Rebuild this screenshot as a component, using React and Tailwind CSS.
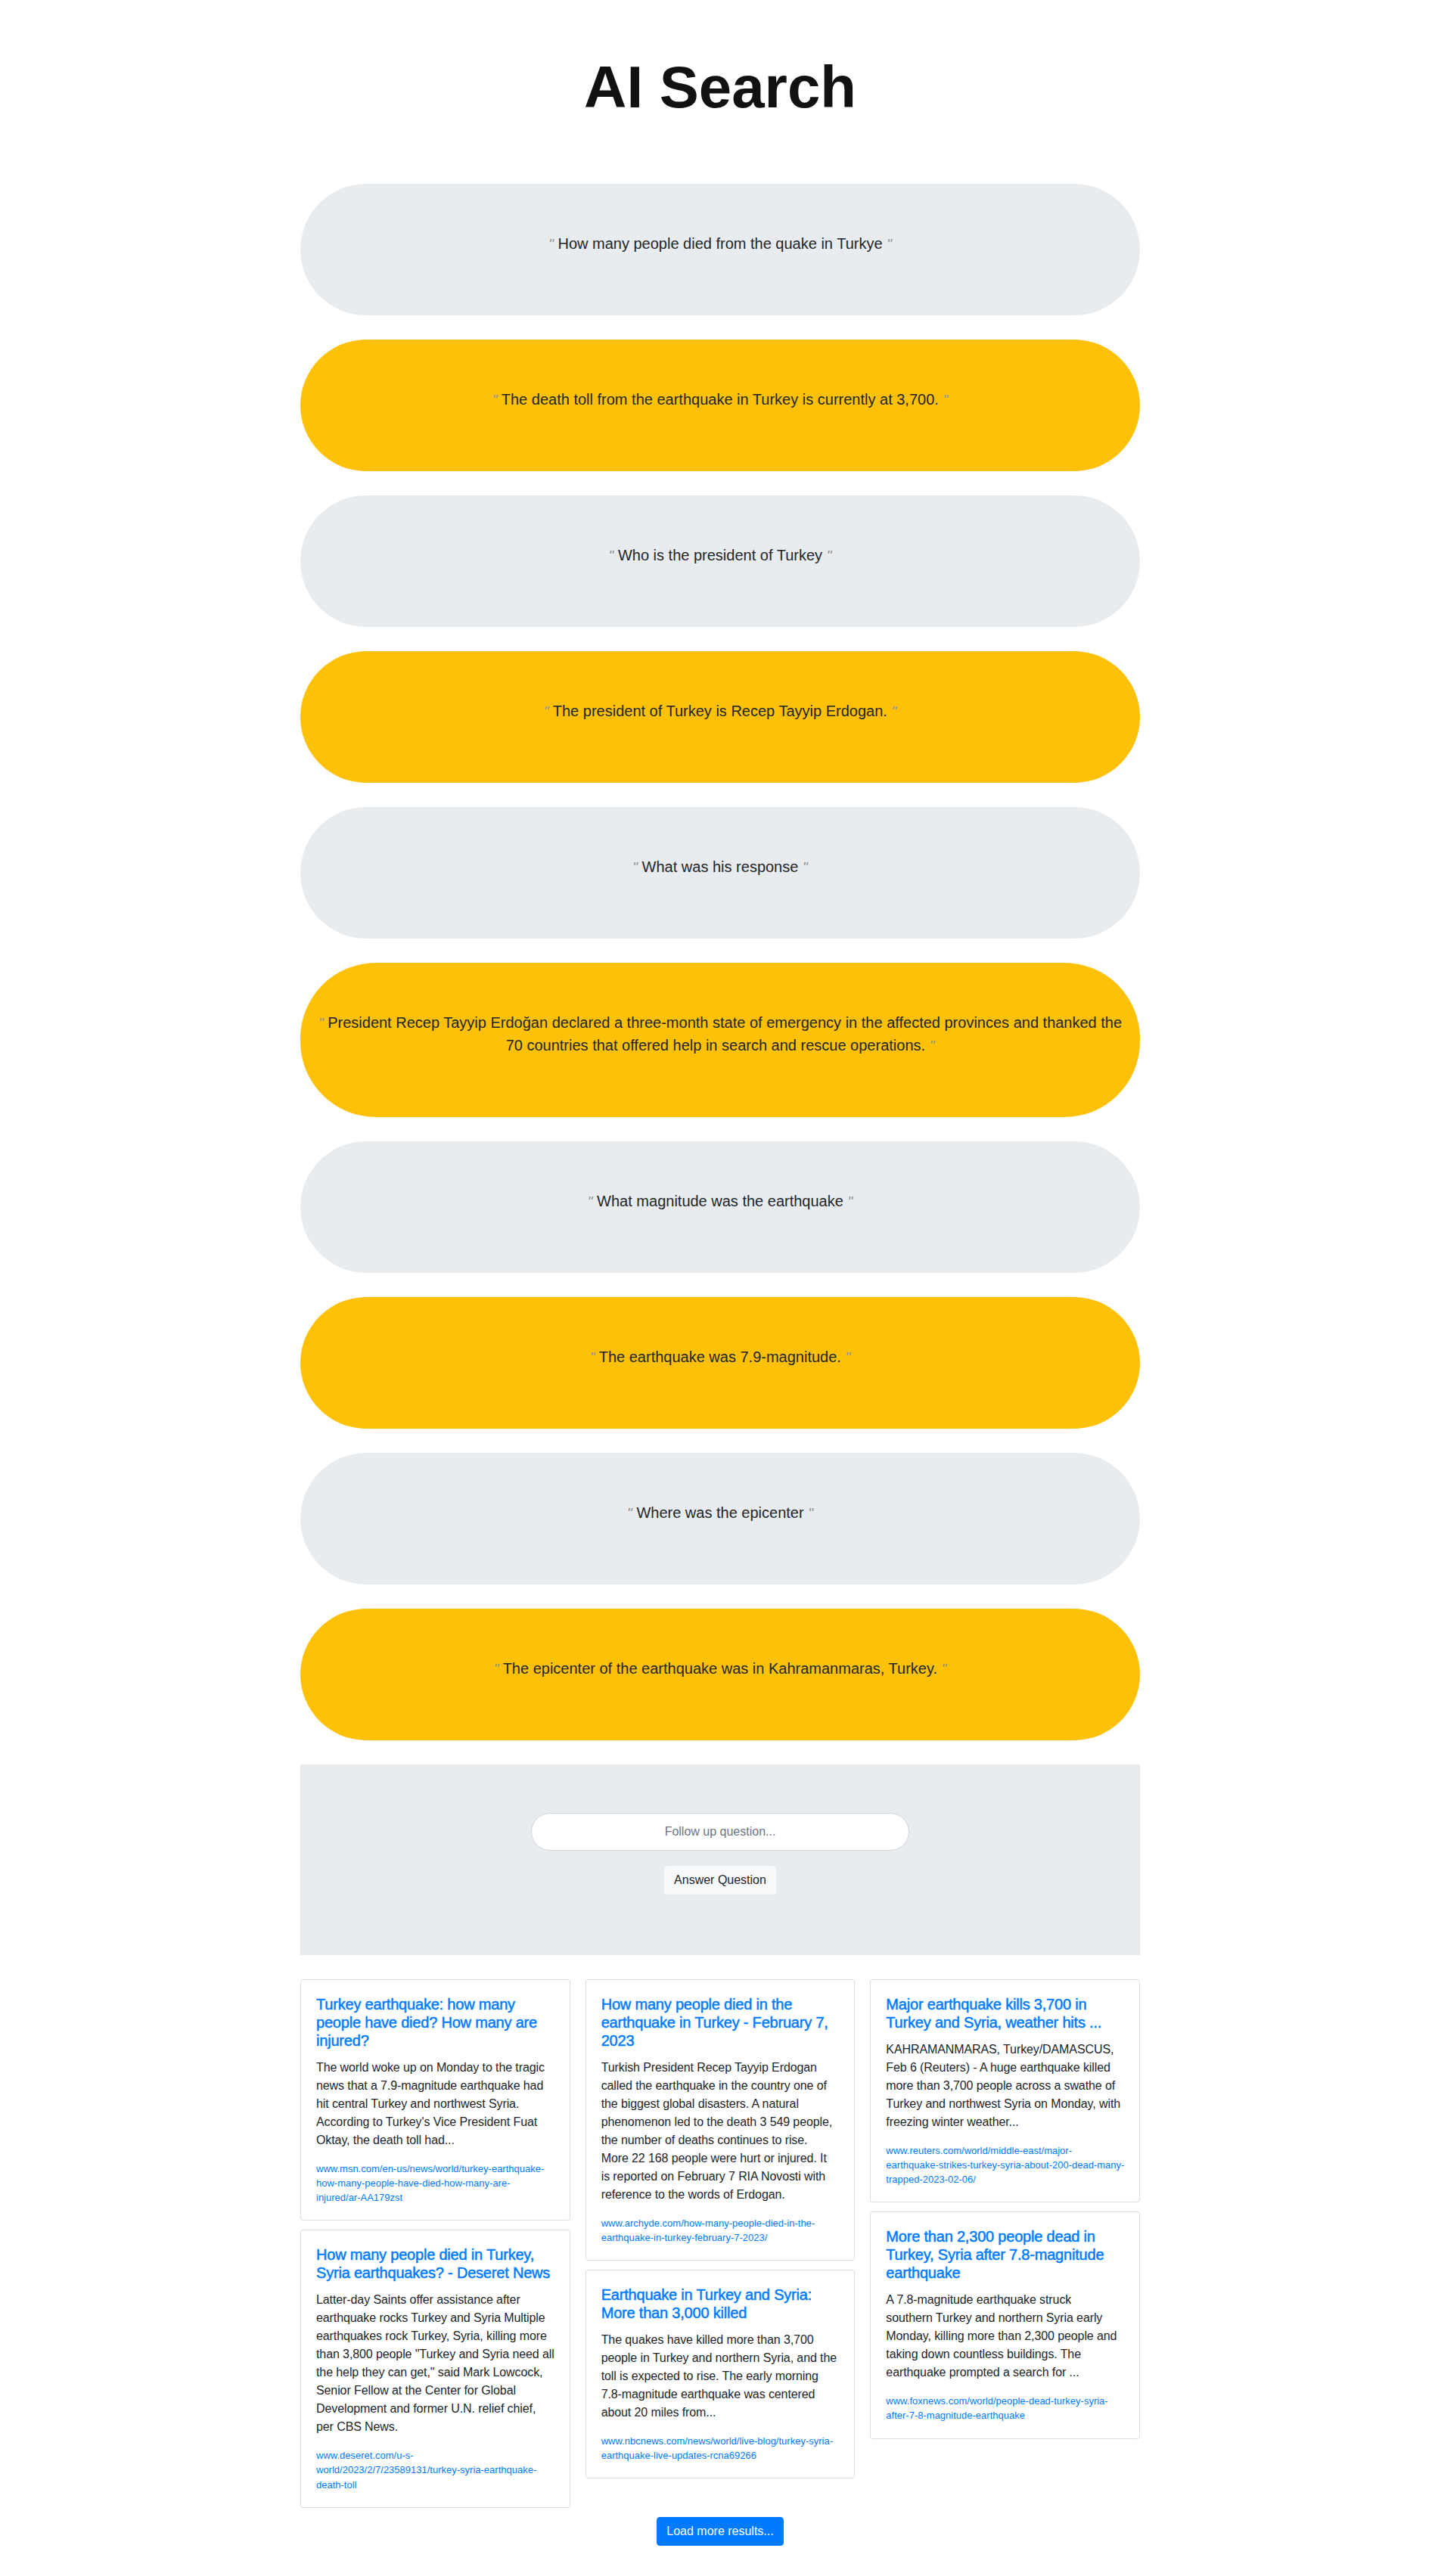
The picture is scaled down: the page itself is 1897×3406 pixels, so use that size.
import React from "react";

const chat = [
  { q: true, t: ["How many people died from the quake in Turkye"] },
  { q: false, t: ["The death toll from the earthquake in Turkey is currently at 3,700."] },
  { q: true, t: ["Who is the president of Turkey"] },
  { q: false, t: ["The president of Turkey is Recep Tayyip Erdogan."] },
  { q: true, t: ["What was his response"] },
  {
    q: false,
    t: [
      "President Recep Tayyip Erdoğan declared a three-month state of emergency in the affected provinces and thanked the",
      "70 countries that offered help in search and rescue operations.",
    ],
  },
  { q: true, t: ["What magnitude was the earthquake"] },
  { q: false, t: ["The earthquake was 7.9-magnitude."] },
  { q: true, t: ["Where was the epicenter"] },
  { q: false, t: ["The epicenter of the earthquake was in Kahramanmaras, Turkey."] },
];

const columns = [
  [
    {
      title: ["Turkey earthquake: how many", "people have died? How many are", "injured?"],
      text: [
        "The world woke up on Monday to the tragic",
        "news that a 7.9-magnitude earthquake had",
        "hit central Turkey and northwest Syria.",
        "According to Turkey's Vice President Fuat",
        "Oktay, the death toll had...",
      ],
      link: [
        "www.msn.com/en-us/news/world/turkey-earthquake-",
        "how-many-people-have-died-how-many-are-",
        "injured/ar-AA179zst",
      ],
    },
    {
      title: ["How many people died in Turkey,", "Syria earthquakes? - Deseret News"],
      text: [
        "Latter-day Saints offer assistance after",
        "earthquake rocks Turkey and Syria Multiple",
        "earthquakes rock Turkey, Syria, killing more",
        'than 3,800 people "Turkey and Syria need all',
        'the help they can get," said Mark Lowcock,',
        "Senior Fellow at the Center for Global",
        "Development and former U.N. relief chief,",
        "per CBS News.",
      ],
      link: [
        "www.deseret.com/u-s-",
        "world/2023/2/7/23589131/turkey-syria-earthquake-",
        "death-toll",
      ],
    },
  ],
  [
    {
      title: ["How many people died in the", "earthquake in Turkey - February 7,", "2023"],
      text: [
        "Turkish President Recep Tayyip Erdogan",
        "called the earthquake in the country one of",
        "the biggest global disasters. A natural",
        "phenomenon led to the death 3 549 people,",
        "the number of deaths continues to rise.",
        "More 22 168 people were hurt or injured. It",
        "is reported on February 7 RIA Novosti with",
        "reference to the words of Erdogan.",
      ],
      link: [
        "www.archyde.com/how-many-people-died-in-the-",
        "earthquake-in-turkey-february-7-2023/",
      ],
    },
    {
      title: ["Earthquake in Turkey and Syria:", "More than 3,000 killed"],
      text: [
        "The quakes have killed more than 3,700",
        "people in Turkey and northern Syria, and the",
        "toll is expected to rise. The early morning",
        "7.8-magnitude earthquake was centered",
        "about 20 miles from...",
      ],
      link: [
        "www.nbcnews.com/news/world/live-blog/turkey-syria-",
        "earthquake-live-updates-rcna69266",
      ],
    },
  ],
  [
    {
      title: ["Major earthquake kills 3,700 in", "Turkey and Syria, weather hits ..."],
      text: [
        "KAHRAMANMARAS, Turkey/DAMASCUS,",
        "Feb 6 (Reuters) - A huge earthquake killed",
        "more than 3,700 people across a swathe of",
        "Turkey and northwest Syria on Monday, with",
        "freezing winter weather...",
      ],
      link: [
        "www.reuters.com/world/middle-east/major-",
        "earthquake-strikes-turkey-syria-about-200-dead-many-",
        "trapped-2023-02-06/",
      ],
    },
    {
      title: ["More than 2,300 people dead in", "Turkey, Syria after 7.8-magnitude", "earthquake"],
      text: [
        "A 7.8-magnitude earthquake struck",
        "southern Turkey and northern Syria early",
        "Monday, killing more than 2,300 people and",
        "taking down countless buildings. The",
        "earthquake prompted a search for ...",
      ],
      link: [
        "www.foxnews.com/world/people-dead-turkey-syria-",
        "after-7-8-magnitude-earthquake",
      ],
    },
  ],
];

function Quote() {
  return <span className="text-[19px] leading-none italic text-[#8f9396]">"</span>;
}

function Lines({ lines }) {
  return lines.map((l, i) => (
    <span key={i} className="block whitespace-nowrap">
      {l}
    </span>
  ));
}

function Bubble({ q, t }) {
  return (
    <div
      className={
        "mb-8 rounded-[100px] px-4 pt-16 pb-16 text-center " +
        (q ? "bg-[#e9ecef]" : "bg-[#ffc107]")
      }
    >
      <p className="mb-4 text-[20px] leading-[30px] text-[#212529]">
        {t.length === 1 ? (
          <>
            <Quote /> {t[0]} <Quote />
          </>
        ) : (
          <>
            <span className="block whitespace-nowrap">
              <Quote /> {t[0]}
            </span>
            <span className="block whitespace-nowrap">
              {t[1]} <Quote />
            </span>
          </>
        )}
      </p>
    </div>
  );
}

function Card({ title, text, link }) {
  return (
    <div className="rounded-[4px] border border-black/[0.125] bg-white p-5">
      <h5 className="mb-3 text-[20px] leading-[24px] tracking-[-0.2px] text-[#007bff] [-webkit-text-stroke:0.5px_#007bff]">
        <Lines lines={title} />
      </h5>
      <p className="mb-4 text-[16px] leading-6 tracking-[-0.1px] text-[#212529]">
        <Lines lines={text} />
      </p>
      <a className="block text-[13px] leading-[19.2px] text-[#007bff]" href="#">
        <Lines lines={link} />
      </a>
    </div>
  );
}

export default function App() {
  return (
    <div className="min-h-screen bg-white pl-[7px] pt-[69px] pb-10 font-['Liberation_Sans',Arial,sans-serif] text-[#212529]">
      <div className="mx-auto w-[1110px]">
        <h1 className="mb-[80px] text-center text-[78px] font-bold leading-[1.2] text-[#111]">
          AI Search
        </h1>

        {chat.map((c, i) => (
          <Bubble key={i} q={c.q} t={c.t} />
        ))}

        <div className="mb-8 flex flex-col items-center bg-[#e9ecef] px-8 py-16">
          <input
            type="text"
            placeholder="Follow up question..."
            className="h-[50px] w-[500px] rounded-full border border-[#ced4da] bg-white px-4 text-center text-[16px] text-[#495057] outline-none placeholder:text-[#6c757d]"
          />
          <button className="mt-5 mb-4 rounded-[4px] border border-[#f8f9fa] bg-[#f8f9fa] px-3 py-[6px] text-[16px] leading-6 text-[#212529]">
            Answer Question
          </button>
        </div>

        <div className="flex gap-5">
          {columns.map((col, i) => (
            <div key={i} className="flex min-w-0 flex-1 flex-col gap-3">
              {col.map((card, j) => (
                <Card key={j} {...card} />
              ))}
            </div>
          ))}
        </div>

        <div className="mt-3 flex justify-center">
          <button className="rounded-[4px] border border-[#007bff] bg-[#007bff] px-3 py-[6px] text-[16px] leading-6 text-white">
            Load more results...
          </button>
        </div>
      </div>
    </div>
  );
}
